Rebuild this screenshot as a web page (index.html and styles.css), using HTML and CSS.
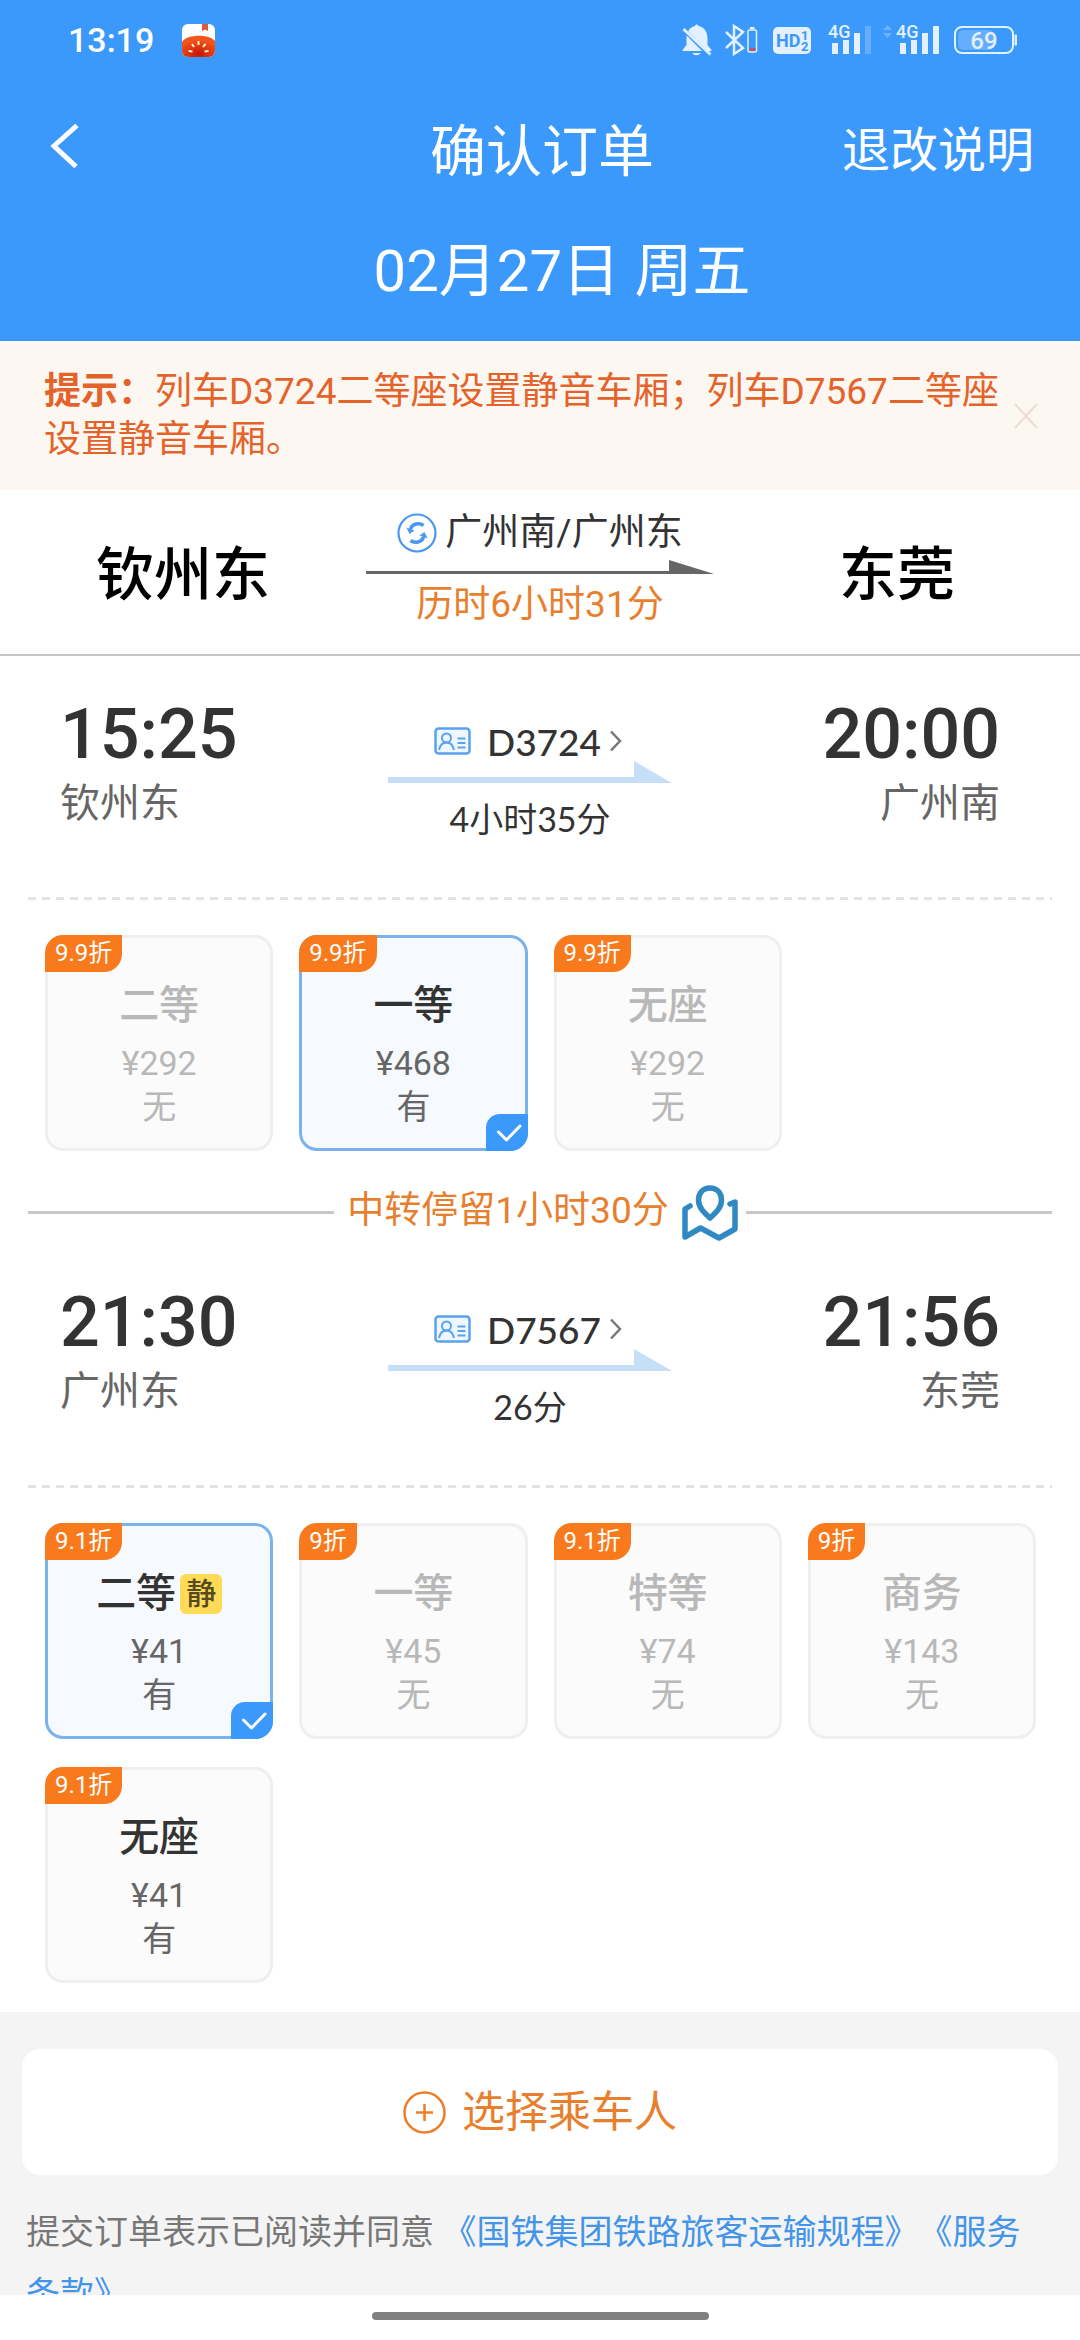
FILE: index.html
```html
<!DOCTYPE html>
<html lang="zh-CN">
<head>
<meta charset="utf-8">
<meta name="viewport" content="width=device-width">
<title>确认订单</title>
<link rel="stylesheet" href="styles.css">
</head>
<body>
<svg class="defs" aria-hidden="true">
  <symbol id="id-card" viewBox="0 0 37 28">
    <rect x="1.5" y="1.5" width="34" height="25" rx="3" fill="#eef6ff" stroke="#5aa2ec" stroke-width="2.5"/>
    <circle cx="12.500" cy="11" r="4.500" fill="none" stroke="#5aa2ec" stroke-width="2"/>
    <path d="M5 23c1-5 4-7.500 7.500-7.500S19 18 20 23M23.500 11.500h8M23.500 16h8M23.500 20.500h8" fill="none" stroke="#5aa2ec" stroke-width="2"/>
  </symbol>
  <symbol id="chevron" viewBox="0 0 13 22">
    <path d="M2 1.500l9 9.500-9 9.500" fill="none" stroke="#777" stroke-width="2.500"/>
  </symbol>
  <symbol id="leg-arrow" viewBox="0 0 284 22">
    <path d="M0 16h246V0l38 22H0z" fill="#c6dff9"/>
  </symbol>
  <symbol id="tick" viewBox="0 0 42 37">
    <path d="M12.500 18l8 8L34 12" fill="none" stroke="#fff" stroke-width="3" stroke-linecap="round" stroke-linejoin="round"/>
  </symbol>
</svg>

<header class="top">
  <div class="status">
    <span class="clock">13:19</span>
    <svg class="app-badge" width="33" height="33" viewBox="0 0 33 33">
      <defs><clipPath id="badge-clip"><rect width="33" height="33" rx="6"/></clipPath>
      <radialGradient id="tomato" cx=".5" cy=".85" r=".65"><stop offset="0" stop-color="#c81408"/><stop offset="1" stop-color="#f2541b"/></radialGradient></defs>
      <g clip-path="url(#badge-clip)">
        <rect width="33" height="33" fill="#fff"/>
        <path d="M20 0h6v7l-3-1.500L20 7z" fill="#e2583a"/>
        <path d="M0 18C5 10 27 10 33 17v16H0z" fill="url(#tomato)"/>
        <path d="M16.500 17v4M10 20l2 3M23.500 20l-2.500 3M6.500 27l4 .5M26.500 27l-4 .5" stroke="#fff3c8" stroke-width="2"/>
      </g>
    </svg>
    <svg class="status-icons" width="336" height="42" viewBox="682 19 336 42" fill="#e3f0ff">
      <path d="M695 26c.5-2 3-2 3.500 0 7 1.500 9 7 9 13v6l4 5v1h-29v-1l4-5v-6c0-6 2-11.500 8.500-13zM692.500 53h8c-1 3-7 3-8 0z"/>
      <path d="M681 27l28 28" stroke="#3b99fc" stroke-width="4"/>
      <path d="M683.500 29l27 25.500" stroke="#e3f0ff" stroke-width="3"/>
      <path d="M726 32l17 16-9 6V26l9 6-17 16" fill="none" stroke="#e3f0ff" stroke-width="2.500"/>
      <rect x="748" y="30" width="8.500" height="22" rx="1.500" fill="none" stroke="#e3f0ff" stroke-width="1.500"/>
      <path d="M750 27h4.500v2H750z"/><path d="M749.500 48h6v3h-6z" fill="#c2517c"/>
      <rect x="773" y="27" width="38" height="27" rx="5"/>
      <text x="776" y="47" class="hd">HD</text>
      <text x="801" y="40" class="hd-small">1</text>
      <text x="801" y="51" class="hd-small">2</text>
      <text x="828" y="38" class="net">4G</text>
      <rect x="832" y="43" width="6" height="11"/><rect x="843" y="40" width="6" height="14"/><rect x="854" y="33" width="6" height="21"/><rect x="865" y="26" width="6" height="28" opacity=".25"/>
      <path d="M883 30l4.500-5 4.500 5zM883 33l4.500 5 4.500-5z" opacity=".3"/>
      <text x="896" y="38" class="net">4G</text>
      <rect x="900" y="43" width="6" height="11"/><rect x="911" y="40" width="6" height="14"/><rect x="922" y="33" width="6" height="21"/><rect x="933" y="26" width="6" height="28"/>
      <rect x="958" y="30" width="36" height="20" rx="5" opacity=".25"/>
      <rect x="955" y="27" width="58" height="26" rx="7" fill="none" stroke="#e3f0ff" stroke-width="2"/>
      <path d="M1014.500 34.500h1.500q1 0 1 1v9q0 1-1 1h-1.500z"/>
      <text x="984" y="49" text-anchor="middle" class="battery">69</text>
    </svg>
  </div>
  <div class="title-row">
    <button class="back" aria-label="返回">
      <svg width="30" height="44" viewBox="0 0 30 44"><path d="M27 1.500L4 22l22 20.500" fill="none" stroke="#fff" stroke-width="5"/></svg>
    </button>
    <h1 class="title">确认订单</h1>
    <a class="rules" href="#rules">退改说明</a>
  </div>
  <p class="date">02月27日 周五</p>
</header>

<main class="content">
  <section class="notice">
    <p class="notice-text"><b>提示：</b>列车D3724二等座设置静音车厢；列车D7567二等座设置静音车厢。</p>
    <button class="notice-close" aria-label="关闭">
      <svg width="24" height="26" viewBox="0 0 24 26"><path d="M1 1l22 24M23 1L1 25" fill="none" stroke="#ecdcd3" stroke-width="2"/></svg>
    </button>
  </section>

  <section class="route">
    <h2 class="city">钦州东</h2>
    <div class="route-mid">
      <div class="via">
        <svg width="40" height="40" viewBox="0 0 40 40" fill="none" stroke="#4a97ee">
          <circle cx="20" cy="20" r="18.500" stroke-width="2.200"/>
          <path d="M13.500 16c1.500-5.500 9-6.500 13-3.500M26.500 24c-1.500 5.500-9 6.500-13 3.500" stroke-width="3.500"/>
          <path d="M9.500 14.500l8 3-5 3.500zM30.500 25.500l-8-3 5-3.500z" fill="#4a97ee" stroke="none"/>
        </svg>
        <span>广州南/广州东</span>
      </div>
      <svg class="route-arrow" width="348" height="14" viewBox="0 0 348 14"><path d="M0 11h303V0l45 14H0z" fill="#666"/></svg>
      <p class="duration">历时6小时31分</p>
    </div>
    <h2 class="city">东莞</h2>
  </section>

  <section class="leg">
    <div class="stop"><p class="time">15:25</p><p class="station">钦州东</p></div>
    <div class="train">
      <a class="train-no" href="#D3724"><svg class="card-icon" width="37" height="28"><use href="#id-card"/></svg><span>D3724</span><svg width="13" height="22"><use href="#chevron"/></svg></a>
      <svg class="leg-line" width="284" height="22"><use href="#leg-arrow"/></svg>
      <p class="train-time">4小时35分</p>
    </div>
    <div class="stop stop-end"><p class="time">20:00</p><p class="station">广州南</p></div>
  </section>
  <hr class="dashes">
  <div class="seats">
    <button class="seat" disabled><span class="off">9.9折</span><span class="kind">二等</span><span class="price">¥292</span><span class="left">无</span></button>
    <button class="seat selected" aria-pressed="true"><span class="off">9.9折</span><span class="kind">一等</span><span class="price">¥468</span><span class="left">有</span><svg class="tick" width="42" height="37"><use href="#tick"/></svg></button>
    <button class="seat" disabled><span class="off">9.9折</span><span class="kind">无座</span><span class="price">¥292</span><span class="left">无</span></button>
  </div>

  <div class="transfer">
    <span class="transfer-text">中转停留1小时30分</span>
    <svg width="56" height="56" viewBox="0 0 56 56" fill="none" stroke="#3189c4" stroke-width="5.500" stroke-linejoin="round" stroke-linecap="round">
      <path d="M28 3C20 3 16.500 9 16.500 15c0 8 6 13 11.500 18 5.500-5 11.500-10 11.500-18C39.500 9 36 3 28 3z"/>
      <path d="M8 21l-5 3v28l15.500-9L37 53l16-9V17l-5 2"/>
    </svg>
  </div>

  <section class="leg">
    <div class="stop"><p class="time">21:30</p><p class="station">广州东</p></div>
    <div class="train">
      <a class="train-no" href="#D7567"><svg class="card-icon" width="37" height="28"><use href="#id-card"/></svg><span>D7567</span><svg width="13" height="22"><use href="#chevron"/></svg></a>
      <svg class="leg-line" width="284" height="22"><use href="#leg-arrow"/></svg>
      <p class="train-time">26分</p>
    </div>
    <div class="stop stop-end"><p class="time">21:56</p><p class="station">东莞</p></div>
  </section>
  <hr class="dashes">
  <div class="seats seats-last">
    <button class="seat selected" aria-pressed="true"><span class="off">9.1折</span><span class="kind">二等<span class="quiet">静</span></span><span class="price">¥41</span><span class="left">有</span><svg class="tick" width="42" height="37"><use href="#tick"/></svg></button>
    <button class="seat" disabled><span class="off">9折</span><span class="kind">一等</span><span class="price">¥45</span><span class="left">无</span></button>
    <button class="seat" disabled><span class="off">9.1折</span><span class="kind">特等</span><span class="price">¥74</span><span class="left">无</span></button>
    <button class="seat" disabled><span class="off">9折</span><span class="kind">商务</span><span class="price">¥143</span><span class="left">无</span></button>
    <button class="seat"><span class="off">9.1折</span><span class="kind">无座</span><span class="price">¥41</span><span class="left">有</span></button>
  </div>

  <section class="bottom">
    <button class="choose">
      <svg width="43" height="43" viewBox="0 0 43 43" fill="none" stroke="#ee7d25"><circle cx="21.500" cy="21.500" r="20" stroke-width="2.500"/><path d="M21.500 13v17M13 21.500h17" stroke-width="2.500"/></svg>
      <span class="choose-text">选择乘车人</span>
    </button>
    <p class="terms">提交订单表示已阅读并同意 <a href="#transport">《国铁集团铁路旅客运输规程》</a><a href="#service">《服务条款》</a></p>
  </section>
</main>

<footer class="home"><span class="home-bar"></span></footer>
</body>
</html>
```
FILE: styles.css
```css
* { box-sizing: border-box; }

body {
  margin: 0;
  height: 100vh;
  display: flex;
  flex-direction: column;
  overflow: hidden;
  background: #fff;
  color: #333;
  font-family: Roboto, "Noto Sans CJK SC", sans-serif;
  text-spacing-trim: space-all;
}

h1, h2, p { margin: 0; font-weight: 400; }
a { text-decoration: none; color: inherit; }
button { padding: 0; border: 0; background: none; font: inherit; color: inherit; }
svg { display: block; flex: none; }
.defs { position: absolute; width: 0; height: 0; }

/* header */
.top { flex: none; background: #3b99fc; color: #fff; }
.status { display: flex; align-items: center; height: 80px; padding: 0 62px 0 68px; }
.clock { font-size: 34px; font-weight: 500; }
.app-badge { margin-left: 28px; }
.status-icons { margin-left: auto; }
.hd { font: 700 18px "Liberation Sans Narrow", Roboto, sans-serif; fill: #3b99fc; }
.hd-small { font: 700 13px Roboto, sans-serif; fill: #3b99fc; }
.net { font: 500 18px Roboto, sans-serif; }
.battery { font: 500 24px Roboto, sans-serif; }
.title-row {
  display: grid;
  grid-template-columns: 1fr auto 1fr;
  align-items: center;
  height: 136px;
  padding: 0 46px 4px 50px;
}
.back { justify-self: start; }
.title { font-size: 56px; }
.rules { justify-self: end; font-size: 48px; }
.date { padding: 2px 0 17px 44px; font-size: 58px; line-height: 106px; text-align: center; }

/* scrolling content */
.content { flex: 1; min-height: 0; display: flex; flex-direction: column; overflow: hidden; }
.content > * { flex: none; }

.notice {
  display: flex;
  align-items: center;
  padding: 27px 42px 26px 44px;
  background: #fdf7f1;
  color: #e4632b;
}
.notice-text { flex: 1; font-size: 37px; line-height: 48px; }
.notice-close { margin-left: 8px; }

.route {
  display: grid;
  grid-template-columns: 1fr 348px 1fr;
  align-items: center;
  height: 166px;
  border-bottom: 2px solid #c6c6c6;
  text-align: center;
}
.city { padding-top: 6px; font-size: 58px; line-height: 84px; font-weight: 500; color: #000; }
.via { display: flex; justify-content: center; align-items: center; gap: 8px; font-size: 37px; line-height: 46px; }
.route-arrow { margin-top: 4px; }
.duration { padding-top: 2px; font-size: 37px; line-height: 58px; color: #e87f2e; }

.leg {
  display: grid;
  grid-template-columns: 1fr 284px 1fr;
  height: 241px;
  padding: 41px 80px 0 60px;
}
.stop-end { text-align: right; }
.time { font-size: 70px; line-height: 74px; font-weight: 500; }
.station { font-size: 40px; line-height: 66px; color: #666; }
.train { padding-top: 24px; font-family: Lato, "Noto Sans CJK SC", sans-serif; text-align: center; }
.train-no { display: flex; justify-content: center; align-items: center; gap: 8px; height: 40px; padding-right: 4px; font-size: 37px; font-weight: 500; }
.card-icon { margin-right: 8px; }
.train-time { font-size: 34px; line-height: 72px; }

.dashes {
  width: auto;
  height: 3px;
  margin: 0 28px;
  border: 0;
  background: repeating-linear-gradient(90deg, #e3e3e3 0 8px, transparent 8px 14px);
}

.seats {
  display: grid;
  grid-template-columns: repeat(4, 1fr);
  gap: 28px 26px;
  padding: 35px 44px 0 45px;
}
.seats-last { padding-bottom: 29px; }
.seat {
  position: relative;
  display: flex;
  flex-direction: column;
  align-items: center;
  height: 216px;
  padding-top: 38px;
  border: 3px solid #efefef;
  border-radius: 18px;
  background: #fbfbfb;
  color: #666;
}
.off {
  position: absolute;
  top: -3px;
  left: -3px;
  padding: 0 10px;
  border-radius: 18px 0;
  background: #f97a1d;
  color: #fff;
  font-size: 24px;
  line-height: 37px;
}
.kind { display: flex; align-items: center; gap: 4px; font-size: 40px; line-height: 60px; font-weight: 500; color: #333; }
.quiet { width: 42px; border-radius: 6px; background: #fddb57; color: #554a20; font-size: 30px; line-height: 40px; }
.price { font-size: 34px; line-height: 54px; }
.left { font-size: 34px; line-height: 34px; }
.seat:disabled, .seat:disabled .kind { color: #b8b8b8; }
.selected { border-color: #7ab3ec; background: #f6f9fe; }
.tick { position: absolute; right: -3px; bottom: -3px; border-radius: 14px 0 18px; background: #3b99fc; }

.transfer { display: flex; align-items: center; gap: 8px; height: 93px; padding: 30px 28px 0; font-size: 37px; color: #e87f2e; }
.transfer::before, .transfer::after { content: ""; flex: 1; height: 3px; background: #c8c8c8; }
.transfer-text { padding: 0 5px 12px; }

.content > .bottom { flex: 1; padding: 37px 22px 0; background: #f4f4f4; }
.choose {
  display: flex;
  justify-content: center;
  align-items: center;
  gap: 16px;
  width: 100%;
  height: 126px;
  border-radius: 18px;
  background: #fff;
  color: #e87f2e;
  font-size: 43px;
}
.choose-text { padding-bottom: 8px; }
.terms { padding: 26px 4px 0; font-size: 34px; line-height: 62px; color: #777; }
.terms a { color: #4495e8; }

.home { flex: none; display: flex; justify-content: center; padding: 17px 0 20px; background: #fff; }
.home-bar { width: 337px; height: 8px; border-radius: 4px; background: #808080; }
```
